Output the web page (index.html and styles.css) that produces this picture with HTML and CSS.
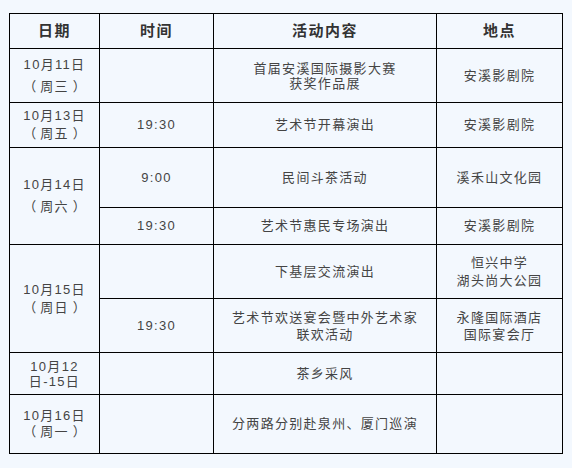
FILE: index.html
```html
<!DOCTYPE html>
<html lang="zh">
<head>
<meta charset="utf-8">
<link rel="stylesheet" href="styles.css">
</head>
<body>
<div class="page">
<table class="schedule">
  <colgroup>
    <col class="c-date">
    <col class="c-time">
    <col class="c-act">
    <col class="c-place">
  </colgroup>
  <thead>
    <tr class="h-head">
      <th>日期</th>
      <th>时间</th>
      <th>活动内容</th>
      <th>地点</th>
    </tr>
  </thead>
  <tbody>
    <tr class="h-54">
      <td class="lh22">10月11日<br><span class="p">（</span>周三<span class="p">）</span></td>
      <td></td>
      <td class="lh15">首届安溪国际摄影大赛<br>获奖作品展</td>
      <td>安溪影剧院</td>
    </tr>
    <tr class="h-45">
      <td class="lh18">10月13日<br><span class="p">（</span>周五<span class="p">）</span></td>
      <td>19:30</td>
      <td>艺术节开幕演出</td>
      <td>安溪影剧院</td>
    </tr>
    <tr class="h-60">
      <td rowspan="2" class="lh22">10月14日<br><span class="p">（</span>周六<span class="p">）</span></td>
      <td>9:00</td>
      <td>民间斗茶活动</td>
      <td>溪禾山文化园</td>
    </tr>
    <tr class="h-37">
      <td>19:30</td>
      <td>艺术节惠民专场演出</td>
      <td>安溪影剧院</td>
    </tr>
    <tr class="h-54">
      <td rowspan="2" class="lh18">10月15日<br><span class="p">（</span>周日<span class="p">）</span></td>
      <td></td>
      <td>下基层交流演出</td>
      <td class="lh18">恒兴中学<br>湖头尚大公园</td>
    </tr>
    <tr class="h-54">
      <td>19:30</td>
      <td class="lh17">艺术节欢送宴会暨中外艺术家<br>联欢活动</td>
      <td class="lh17">永隆国际酒店<br>国际宴会厅</td>
    </tr>
    <tr class="h-42">
      <td class="lh15">10月12<br>日-15日</td>
      <td></td>
      <td>茶乡采风</td>
      <td></td>
    </tr>
    <tr class="h-59">
      <td class="lh16">10月16日<br><span class="p">（</span>周一<span class="p">）</span></td>
      <td></td>
      <td>分两路分别赴泉州、厦门巡演</td>
      <td></td>
    </tr>
  </tbody>
</table>
</div>
</body>
</html>
```

FILE: styles.css
```css
html, body {
  margin: 0;
  padding: 0;
  background: #f3f8fe;
}

.page {
  padding: 13px 9px;
  font-family: "Liberation Sans", "Noto Sans CJK SC", sans-serif;
}

.schedule {
  border-collapse: collapse;
  table-layout: fixed;
  width: 554px;
}

.c-date { width: 90px; }
.c-time { width: 114px; }
.c-act { width: 223px; }
.c-place { width: 126px; }

.schedule th,
.schedule td {
  border: 1px solid #000;
  padding: 0;
  text-align: center;
  vertical-align: middle;
}

.schedule th {
  font-size: 15px;
  font-weight: bold;
  color: #333;
  letter-spacing: 1.5px;
  line-height: 18px;
}

.schedule td {
  font-size: 13px;
  color: #444;
  letter-spacing: 1.3px;
  line-height: 16px;
}

.schedule td .p {
  display: inline-block;
  width: 14.3px;
  letter-spacing: 0;
  text-align: center;
  font-feature-settings: "halt" 1;
}

.schedule td.lh15 { line-height: 15px; }
.schedule td.lh16 { line-height: 16px; }
.schedule td.lh17 { line-height: 17px; }
.schedule td.lh18 { line-height: 18px; }
.schedule td.lh22 { line-height: 22px; }

.h-head { height: 35px; }
.h-54 { height: 54px; }
.h-45 { height: 45px; }
.h-60 { height: 60px; }
.h-37 { height: 37px; }
.h-42 { height: 42px; }
.h-59 { height: 59px; }
```
